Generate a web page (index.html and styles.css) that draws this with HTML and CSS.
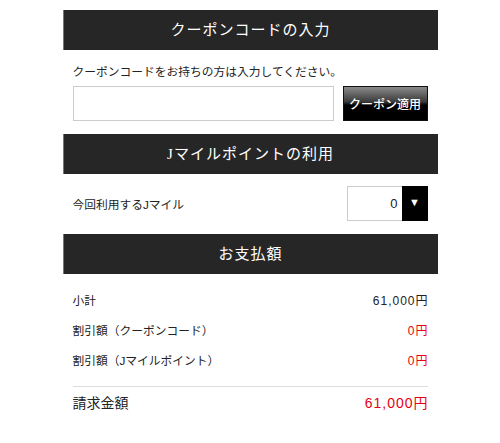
FILE: index.html
```html
<!DOCTYPE html>
<html lang="ja">
<head>
<meta charset="utf-8">
<link rel="stylesheet" href="styles.css">
</head>
<body>
<div class="wrap">
  <section class="sec">
    <h2 class="sec-title">クーポンコードの入力</h2>
    <div class="sec-body coupon">
      <p class="note">クーポンコードをお持ちの方は入力してください。</p>
      <div class="coupon-row">
        <input class="coupon-input" type="text">
        <button class="coupon-btn">クーポン適用</button>
      </div>
    </div>
  </section>
  <section class="sec">
    <h2 class="sec-title">Jマイルポイントの利用</h2>
    <div class="sec-body mile">
      <span class="label">今回利用するJマイル</span>
      <div class="select">
        <span class="select-val">0</span>
        <span class="select-arrow">▼</span>
      </div>
    </div>
  </section>
  <section class="sec">
    <h2 class="sec-title">お支払額</h2>
    <div class="sec-body pay">
      <div class="pay-row"><span>小計</span><span class="amt">61,000円</span></div>
      <div class="pay-row"><span>割引額（クーポンコード）</span><span class="amt red">0円</span></div>
      <div class="pay-row"><span>割引額（Jマイルポイント）</span><span class="amt red">0円</span></div>
      <div class="pay-total"><span>請求金額</span><span class="amt red">61,000円</span></div>
    </div>
  </section>
</div>
</body>
</html>
```
FILE: styles.css
```css
* { box-sizing: border-box; }
html, body { margin: 0; padding: 0; background: #fff; }
body {
  font-family: "Liberation Sans", "Noto Sans CJK JP", sans-serif;
  color: #222;
  font-size: 11.75px;
}
.wrap {
  width: 375px;
  margin: 10px auto 0;
}
.sec-title {
  margin: 0;
  height: 40px;
  line-height: 40px;
  background: #262626;
  border-left: 1px solid #777;
  color: #fff;
  text-align: center;
  font-family: "Liberation Serif", "Noto Sans CJK JP", serif;
  font-weight: normal;
  font-size: 15px;
  letter-spacing: 1px;
}
.sec-body { padding: 0 10px; }
.coupon { padding-top: 14px; padding-bottom: 13px; }
.note { margin: 0 0 5px; line-height: 16px; }
.coupon-row {
  display: flex;
  align-items: center;
  justify-content: space-between;
}
.coupon-input {
  width: 261px;
  height: 35px;
  border: 1px solid #ccc;
  margin: 0;
  padding: 0 6px;
  outline: none;
}
.coupon-btn {
  width: 85px;
  height: 35px;
  margin: 1px 0 0;
  padding: 0;
  border: 1px solid #111;
  background: linear-gradient(to bottom, #8a8a8a 0%, #3a3a3a 45%, #000 55%, #000 100%);
  color: #fff;
  font-family: "Liberation Sans", "Noto Sans CJK JP", sans-serif;
  font-size: 12px;
  font-weight: 500;
}
.mile {
  padding-top: 12px;
  padding-bottom: 13px;
  display: flex;
  align-items: center;
  justify-content: space-between;
}
.select {
  width: 81px;
  height: 35px;
  border: 1px solid #ccc;
  display: flex;
  align-items: stretch;
}
.select-val {
  flex: 1;
  text-align: right;
  padding-right: 4px;
  line-height: 33px;
  font-size: 13px;
}
.select-arrow {
  width: 26px;
  background: #000;
  color: #fff;
  text-align: center;
  line-height: 33px;
  font-size: 11px;
  margin: -1px -1px -1px 0;
  height: 35px;
}
.pay { padding-top: 12px; }
.pay-row {
  display: flex;
  justify-content: space-between;
  height: 30px;
  line-height: 30px;
}
.pay-row .amt { font-size: 12px; letter-spacing: 1px; margin-right: -1px; }
.pay-total {
  margin-top: 10px;
  border-top: 1px solid #ddd;
  display: flex;
  justify-content: space-between;
  height: 33px;
  line-height: 32px;
  font-size: 14px;
}
.pay-total .amt { letter-spacing: 1px; margin-right: -1px; }
.red { color: #e60012; }
```
